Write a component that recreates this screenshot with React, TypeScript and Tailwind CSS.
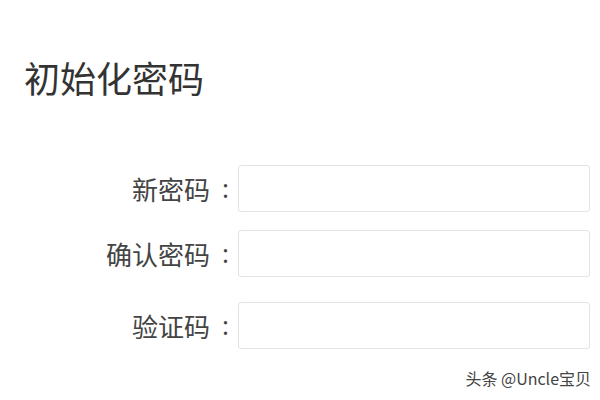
export default function App() {
  const font = { fontFamily: '"Noto Sans CJK SC", "Noto Sans", sans-serif' };
  const rows: { label: string; mt: string }[] = [
    { label: "新密码", mt: "mt-0" },
    { label: "确认密码", mt: "mt-[18px]" },
    { label: "验证码", mt: "mt-[25px]" },
  ];
  return (
    <div className="w-[600px] h-[400px] bg-white relative overflow-hidden" style={font}>
      <div className="flex flex-col pl-[24px] pt-[53px]">
        <h1 className="text-[36px] leading-[48px] text-[#333] font-normal">初始化密码</h1>
      </div>
      <div className="flex flex-col mt-[64px]">
        {rows.map((r) => (
          <div key={r.label} className={`flex items-center h-[47px] ${r.mt}`}>
            <label className="w-[230px] flex justify-end items-center text-[26px] text-[#444] pr-[1px]">
              <span>{r.label}</span>
              <span className="pl-[12px]" style={{ fontFamily: '"Noto Sans", sans-serif' }}>:</span>
            </label>
            <div className="ml-[8px] w-[352px] h-[47px] border border-[#e3e3e3] rounded-[3px]" />
          </div>
        ))}
      </div>
      <div className="absolute right-[9px] top-[368px] text-[16px] text-[#444] leading-[20px]">头条 @Uncle宝贝</div>
    </div>
  );
}
